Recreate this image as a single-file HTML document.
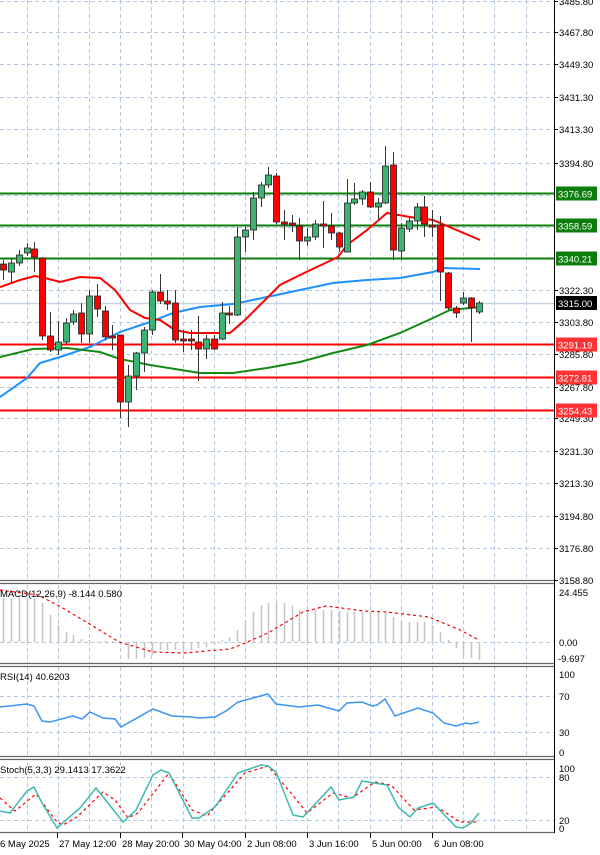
<!DOCTYPE html>
<html><head><meta charset="utf-8"><style>
html,body{margin:0;padding:0;background:#fff;width:600px;height:855px;overflow:hidden}
svg{display:block;font-family:"Liberation Sans",Arial,sans-serif}
</style></head><body>
<svg id="s" width="600" height="855" xmlns="http://www.w3.org/2000/svg"></svg>
<script>
var s=document.getElementById('s'),o='';
function L(x1,y1,x2,y2,c,w,d){o+='<line x1="'+x1+'" y1="'+y1+'" x2="'+x2+'" y2="'+y2+'" stroke="'+c+'" stroke-width="'+(w||1)+'"'+(d?' stroke-dasharray="'+d+'"':'')+'/>';}
function P(pts,c,w,d){o+='<polyline fill="none" points="'+pts.map(function(p){return p.join(',')}).join(' ')+'" stroke="'+c+'" stroke-width="'+(w||1)+'"'+(d?' stroke-dasharray="'+d+'"':'')+'/>';}
function T(x,y,t,c,sz,a){o+='<text x="'+x+'" y="'+y+'" fill="'+(c||'#000')+'" font-size="'+(sz||10)+'"'+(a?' text-anchor="'+a+'"':'')+'>'+t+'</text>';}
var G='#b4c8e0',GD='4,3';
// vertical grid
var vx=[];for(var x=26.5;x<554;x+=31.2)vx.push(Math.round(x)+0.5);
function vgrid(y1,y2){vx.forEach(function(x){L(x,y1,x,y2,G,1,GD);});}
// main panel
vgrid(0,580);
var prices=[[1,'3485.80'],[32,'3467.80'],[64,'3449.30'],[97,'3431.30'],[129,'3413.30'],[163,'3394.80'],[195,''],[227,''],[258,''],[290,'3322.30'],[322,'3303.80'],[354,'3285.80'],[387,'3267.80'],[418,'3249.30'],[451,'3231.30'],[483,'3213.30'],[516,'3194.80'],[548,'3176.80'],[580,'3158.80']];
prices.forEach(function(p){L(0,p[0]+0.5,554,p[0]+0.5,G,1,GD);if(p[1]){L(554,p[0]+0.5,558,p[0]+0.5,'#000');T(559,p[0]+4,p[1],'#000',9.5);}});
// current price line
L(0,303.5,554,303.5,'#c8d4e2',1.5);
// levels
var lv=[[193.5,'3376.69','#0a7d0a','#0a7d0a'],[225.5,'3358.59','#0a7d0a','#0a7d0a'],[258.5,'3340.21','#0a7d0a','#0a7d0a'],[344.5,'3291.19','#f00','#f33'],[377.5,'3272.81','#f00','#f33'],[410.5,'3254.43','#f00','#f33']];
lv.forEach(function(l){L(0,l[0],555,l[0],l[2],2);});
// MAs
P([[0,397],[27,378],[40,363],[60,357],[90,347],[120,332],[150,322],[173,313],[200,307],[233,304],[267,297],[300,290],[333,283],[367,280],[400,278],[433,272],[443,268],[480,269]],'#1e90ff',2);
P([[0,357],[33,349],[67,348],[100,352],[120,359],[150,365],[200,373],[233,373],[267,368],[300,362],[333,353],[367,345],[400,333],[433,318],[450,310],[480,307]],'#138a13',2);
P([[0,287],[20,280],[35,276],[45,278],[60,282],[80,277],[100,278],[115,290],[130,310],[145,318],[160,320],[175,330],[190,333],[230,333],[245,320],[260,305],[280,285],[300,275],[338,257],[347,245],[367,230],[387,213],[410,217],[433,220],[480,240]],'#f00',2);
// candles x,bodyTop,bodyBot,wickTop,wickBot,up
var C=[[3,264,270,260,280,0],[11,263,272,258,283,1],[19,255,263,250,266,1],[27,248,253,243,256,1],[34,249,257,242,272,0],[42,258,336,257,340,0],[50,336,350,312,352,0],[58,342,350,321,355,1],[66,323,342,318,344,1],[73,314,322,310,325,1],[81,313,334,303,343,0],[89,296,334,290,343,1],[97,296,309,284,317,0],[105,311,337,306,340,0],[112,336,338,325,350,0],[120,335,402,335,418,0],[128,376,402,365,427,1],[136,353,376,352,390,1],[144,330,353,327,372,1],[152,292,330,290,335,1],[160,292,301,274,304,0],[167,301,304,290,310,0],[175,303,340,290,343,0],[183,339,341,330,352,0],[191,339,341,330,350,0],[198,342,349,316,381,0],[206,339,349,335,359,1],[214,339,349,335,350,0],[222,313,339,302,340,1],[229,313,315,306,324,0],[237,237,315,227,316,1],[245,230,237,227,252,1],[253,198,230,192,240,1],[261,185,198,182,207,1],[268,175,185,167,188,1],[276,176,222,173,224,0],[284,222,224,210,240,0],[292,223,225,215,232,0],[299,226,241,218,260,0],[307,237,241,228,246,1],[315,224,237,220,240,1],[323,224,226,201,248,0],[331,226,233,213,240,0],[339,233,247,232,252,0],[347,203,252,179,252,1],[354,199,203,183,205,1],[362,192,199,190,205,1],[370,192,207,182,208,0],[378,203,207,198,220,1],[385,166,203,146,204,1],[393,165,250,152,260,0],[401,228,251,223,260,1],[409,221,229,218,232,1],[417,207,221,203,230,1],[424,207,224,196,237,0],[432,225,227,210,237,0],[440,225,272,216,301,0],[448,273,308,272,310,0],[456,308,313,306,318,0],[463,298,303,292,305,1],[471,298,308,297,342,0],[479,303,312,301,314,1]];
C.forEach(function(c){var x=c[0]+0.5;L(x,c[3],x,c[4],'#333',1);var h=Math.max(c[2]-c[1],1.5);o+='<rect x="'+(c[0]-2.5)+'" y="'+c[1]+'" width="6" height="'+h+'" fill="'+(c[5]?'#3cb371':'#f00')+'" stroke="#222" stroke-width="0.8"/>';});
// level labels
lv.forEach(function(l){o+='<rect x="556" y="'+(l[0]-7)+'" width="41" height="14" fill="'+l[3]+'"/>';T(558,l[0]+4,l[1],'#fff',9.5);});
o+='<rect x="556" y="296" width="41" height="14" fill="#000"/>';T(558,307,'3315.00','#fff',9.5);
// separators
function sep(y){o+='<rect x="0" y="'+y+'" width="555" height="4" fill="#fff"/>';L(0,y+0.5,555,y+0.5,'#666',1.2);L(0,y+3.5,555,y+3.5,'#666',1.2);}
// MACD panel 585-663
vgrid(585,663);
L(0,642.5,554,642.5,G,1,GD);
var hv=[598,598,598,598,598,603,615,625,632,635,639,640,641,641,641,642,659,659,658,655,650,650,650,649,650,648,647,645,640,637,630,620,612,605,603,603,603,606,610,610,610,610,610,611,612,612,612,612,612,613,617,620,622,622,622,625,632,640,648,655,658,660];
C.forEach(function(c,i){var v=hv[i];if(Math.abs(v-642)>0.5)L(c[0]+0.5,642,c[0]+0.5,v,'#c4c4c4',1.5);});
P([[0,590],[38,595],[61,607],[88,623],[119,642],[153,652],[184,653],[230,649],[245,643],[268,633],[303,612],[326,606],[364,611],[387,612],[429,617],[460,630],[479,640]],'#f00',1.2,'3,3');
T(0,597,'MACD(12,26,9) -8.144 0.580','#000',9.5);
T(559,596,'24.455','#000',9.5);T(559,646,'0.00','#000',9.5);T(558,662,'-9.697','#000',9.5);
// RSI 667-756
vgrid(667,756);
L(0,696.5,554,696.5,G,1,GD);L(0,732.5,554,732.5,G,1,GD);
P([[0,707],[27,704],[34,706],[42,721],[50,722],[73,716],[82,719],[90,712],[103,718],[115,719],[121,727],[153,709],[172,716],[192,717],[199,718],[215,717],[226,711],[238,702],[264,695],[268,694],[276,704],[299,707],[318,705],[339,711],[347,703],[362,702],[372,706],[377,705],[385,699],[395,716],[418,708],[433,713],[444,723],[456,726],[466,723],[471,724],[479,722]],'#3a96f0',1.5);
T(0,680,'RSI(14) 40.6203','#000',9.5);
T(559,678,'100','#000',9.5);T(559,700,'70','#000',9.5);T(559,736,'30','#000',9.5);T(559,756,'0','#000',9.5);
// Stoch 762-832
vgrid(762,832);
L(0,777.5,554,777.5,G,1,GD);L(0,820.5,554,820.5,G,1,GD);
P([[0,798],[15,811],[36,794],[57,822],[63,825],[77,817],[103,792],[115,800],[128,818],[138,813],[169,773],[192,810],[207,816],[245,773],[268,766],[291,793],[307,813],[333,793],[352,798],[375,782],[391,785],[414,810],[437,807],[460,822],[479,822]],'#f00',1.2,'3,3');
P([[0,811],[10,813],[27,791],[34,787],[42,803],[57,828],[80,808],[96,788],[123,822],[136,810],[153,775],[161,770],[169,773],[192,818],[199,818],[215,807],[238,773],[261,765],[268,766],[276,772],[293,815],[303,817],[331,787],[339,800],[354,797],[362,781],[387,785],[398,807],[410,817],[418,808],[433,803],[456,827],[463,828],[471,823],[479,813]],'#3cbcb0',1.5);
T(0,773,'Stoch(5,3,3) 29.1413 17.3622','#000',9.5);
T(559,772,'100','#000',9.5);T(559,781,'80','#000',9.5);T(559,824,'20','#000',9.5);T(559,832,'0','#000',9.5);
// separators
sep(580);sep(663);sep(756);
L(0,832.5,555,832.5,'#666',1.2);
// right axis line
L(554.5,0,554.5,833,'#000',1);
// date axis
[[57,'27 May 12:00'],[120,'28 May 20:00'],[182,'30 May 04:00'],[245,'2 Jun 08:00'],[307,'3 Jun 16:00'],[370,'5 Jun 00:00'],[432,'6 Jun 08:00']].forEach(function(d){L(d[0]+0.5,833,d[0]+0.5,838,'#000');T(d[0]+2,847,d[1],'#000',9.5);});
T(0,847,'6 May 2025','#000',9.5);
s.innerHTML=o;
</script>
</body></html>
